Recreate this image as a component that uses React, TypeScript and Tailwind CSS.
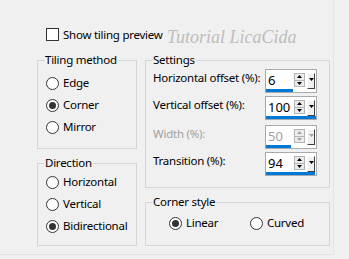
import React from "react";

type RadioProps = { label: string; checked?: boolean; className?: string };

function Radio({ label, checked, className = "" }: RadioProps) {
	return (
		<div className={`flex items-center gap-[4px] h-[22px] ${className}`}>
			<span className="w-[13px] h-[13px] rounded-full border border-[#333333] bg-white flex items-center justify-center shrink-0">
				{checked && <span className="w-[7px] h-[7px] rounded-full bg-[#333333]" />}
			</span>
			<span>{label}</span>
		</div>
	);
}

type GroupProps = { title: string; className?: string; children: React.ReactNode };

function Group({ title, className = "", children }: GroupProps) {
	return (
		<fieldset className={`border border-[#d5d5d5] ${className}`}>
			<legend className="ml-[6px] px-[1px] leading-[16px]">{title}</legend>
			{children}
		</fieldset>
	);
}

type SpinProps = { value: string; bar: number; disabled?: boolean };

function Spin({ value, bar, disabled }: SpinProps) {
	const arrow = disabled ? "#a0a0a0" : "#000000";
	return (
		<div className="w-[52px] h-[24px] border border-[#a9a9a9] bg-white flex flex-col">
			<div className="h-[19px] flex items-start">
				<span
					className={`flex-1 pl-[2px] pt-[2px] text-[13px] leading-[16px] tracking-normal ${
						disabled ? "text-[#a0a0a0]" : "text-black"
					}`}>
					{value}
				</span>
				{/* spin up / down */}
				<div className="mt-[3px] w-[11px] h-[14px] flex flex-col border border-[#b4b4b4] bg-[#ececec]">
					<div className="flex-1 flex items-center justify-center border-b border-[#b4b4b4]">
						<svg width="5" height="3" viewBox="0 0 5 3">
							<path d="M0 3 L2.5 0 L5 3 Z" fill={arrow} />
						</svg>
					</div>
					<div className="flex-1 flex items-center justify-center">
						<svg width="5" height="3" viewBox="0 0 5 3">
							<path d="M0 0 L2.5 3 L5 0 Z" fill={arrow} />
						</svg>
					</div>
				</div>
				{/* dropdown */}
				<div className="ml-[2px] mr-[1px] mt-[3px] w-[8px] h-[16px] bg-[#f0f0f0] border-t border-l border-t-white border-l-white border-r border-b border-r-[#404040] border-b-[#404040] flex justify-center pt-[4px]">
					<svg width="5" height="3" viewBox="0 0 5 3">
						<path d="M0 0 L2.5 3 L5 0 Z" fill={arrow} />
					</svg>
				</div>
			</div>
			<div className="h-[3px]">
				<div className="h-full bg-[#0078d7]" style={{ width: bar }} />
			</div>
		</div>
	);
}

const rows = [
	{ label: "Horizontal offset (%):", value: "6", bar: 27, h: "h-[27px]" },
	{ label: "Vertical offset (%):", value: "100", bar: 50, h: "h-[29px]" },
	{ label: "Width (%):", value: "50", bar: 25, h: "h-[27px]", disabled: true },
	{ label: "Transition (%):", value: "94", bar: 49, h: "h-[24px]" },
];

export default function App() {
	return (
		<div className="w-[349px] h-[259px] bg-[#f0f0f0] font-['Noto_Sans',sans-serif] text-[11.5px] tracking-[-0.25px] text-black overflow-hidden">
			<div className="relative w-[334px] h-[255px] border-r border-b border-[#e4e4e4] pt-[28px]">
				<div className="flex items-center gap-[4px] h-[13px] pl-[46px]">
					<span className="w-[13px] h-[13px] border border-[#333333] bg-white" />
					<span className="leading-[16px]">Show tiling preview</span>
				</div>
				{/* watermark */}
				<span className="absolute left-[167px] top-[26px] font-['Liberation_Serif',serif] italic text-[18px] leading-[22px] tracking-normal text-[#bdbdbd] pointer-events-none">
					Tutorial LicaCida
				</span>

				<div className="flex gap-[8px] pl-[37px] mt-[11px]">
					<div className="w-[100px] flex flex-col gap-[6px]">
						<Group title="Tiling method" className="h-[97px]">
							<div className="pl-[8px] pt-[4px]">
								<Radio label="Edge" />
								<Radio label="Corner" checked />
								<Radio label="Mirror" />
							</div>
						</Group>
						<Group title="Direction" className="h-[91px]">
							<div className="pl-[8px]">
								<Radio label="Horizontal" />
								<Radio label="Vertical" />
								<Radio label="Bidirectional" checked />
							</div>
						</Group>
					</div>

					<div className="w-[185px] flex flex-col gap-[6px]">
						<Group title="Settings" className="h-[136px]">
							<div className="pt-[1px] pl-[7px] pr-[12px]">
								{rows.map((r) => (
									<div key={r.label} className={`flex items-start ${r.h}`}>
										<span
											className={`flex-1 mt-[1px] leading-[16px] whitespace-nowrap ${
												r.disabled ? "text-[#a0a0a0]" : ""
											}`}>
											{r.label}
										</span>
										<Spin value={r.value} bar={r.bar} disabled={r.disabled} />
									</div>
								))}
							</div>
						</Group>
						<Group title="Corner style" className="h-[52px]">
							<div className="flex pl-[23px] pt-[2px]">
								<Radio label="Linear" checked className="w-[81px]" />
								<Radio label="Curved" />
							</div>
						</Group>
					</div>
				</div>
			</div>
		</div>
	);
}
